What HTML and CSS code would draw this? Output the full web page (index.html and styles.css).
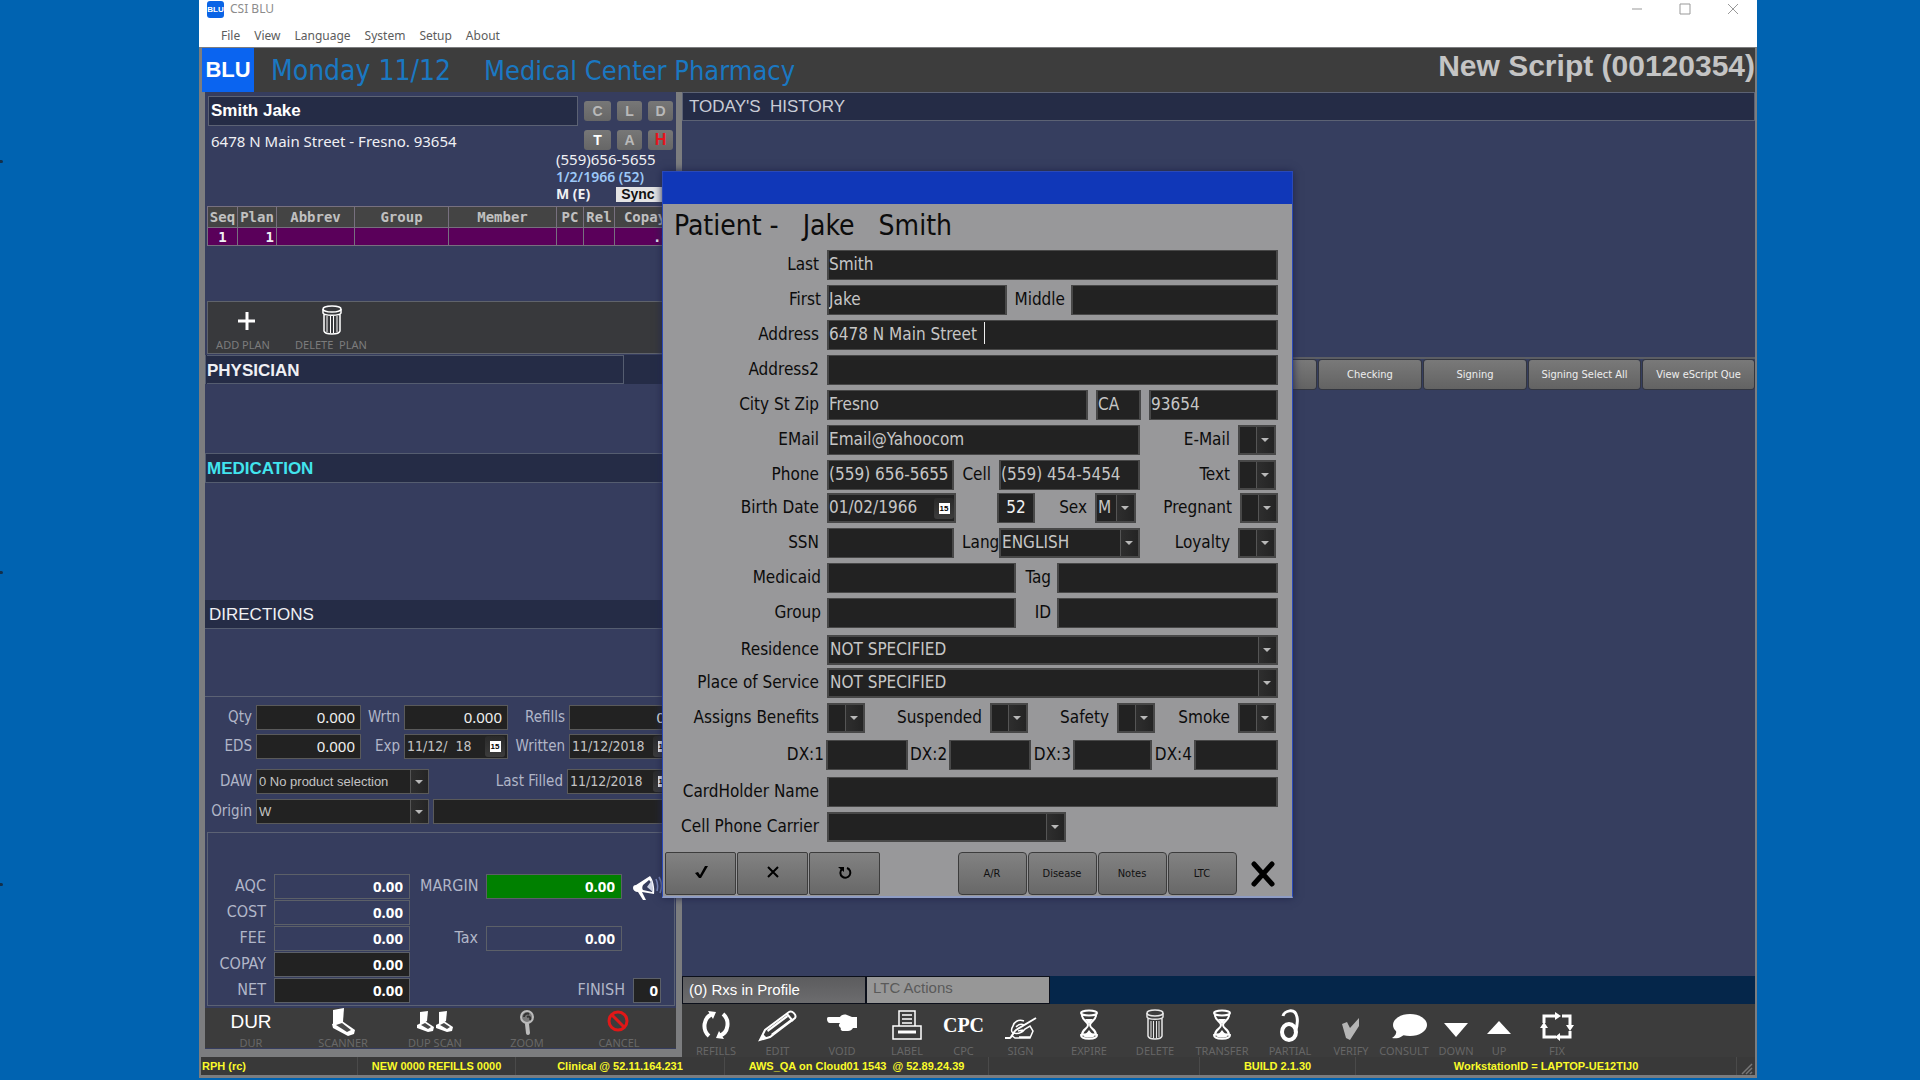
FILE: index.html
```html
<!DOCTYPE html>
<html lang="en">
<head>
<meta charset="utf-8">
<title>CSI BLU</title>
<link rel="stylesheet" href="styles.css">
</head>
<body>
<div class="desktop">
<i class="speck speck-a"></i><i class="speck speck-b"></i><i class="speck speck-c"></i>
<main class="app">
  <div class="title-bar">
    <span class="app-icon">BLU</span>
    <span class="app-title">CSI BLU</span>
    <div class="window-buttons">
      <button type="button" aria-label="Minimize"><svg width="12" height="12" viewBox="0 0 12 12"><path d="M1 6h10"/></svg></button>
      <button type="button" aria-label="Maximize"><svg width="12" height="12" viewBox="0 0 12 12"><path d="M1 1h10v10H1z"/></svg></button>
      <button type="button" aria-label="Close"><svg width="12" height="12" viewBox="0 0 12 12"><path d="M1 1l10 10M11 1L1 11"/></svg></button>
    </div>
  </div>
  <nav class="menu-bar">
    <a href="#">File</a><a href="#">View</a><a href="#">Language</a><a href="#">System</a><a href="#">Setup</a><a href="#">About</a>
  </nav>
  <header class="banner">
    <span class="brand">BLU</span>
    <span class="banner-date">Monday 11/12</span>
    <span class="banner-store">Medical Center Pharmacy</span>
    <h1 class="banner-script">New Script (00120354)</h1>
  </header>

  <div class="workspace">
    <section class="script-panel">
      <div class="patient">
        <div class="patient-head">
          <div class="patient-who">
            <input class="patient-name" type="text" value="Smith Jake" aria-label="Patient">
            <p class="patient-address">6478 N Main Street - Fresno. 93654</p>
          </div>
          <div class="badges">
            <button type="button">C</button><button type="button">L</button><button type="button">D</button>
            <button type="button" class="badge-on">T</button><button type="button">A</button><button type="button" class="badge-alert">H</button>
          </div>
        </div>
        <div class="contact">
          <span>(559)656-5655</span>
          <span class="contact-birth">1/2/1966 (52)</span>
          <div class="contact-sex"><b>M (E)</b><button type="button" class="sync">Sync</button></div>
        </div>
      </div>

      <div class="plans">
        <table class="plan-table">
          <colgroup><col class="c-seq"><col class="c-plan"><col class="c-abbrev"><col class="c-group"><col class="c-member"><col class="c-pc"><col class="c-rel"><col></colgroup>
          <thead><tr><th>Seq</th><th>Plan</th><th>Abbrev</th><th>Group</th><th>Member</th><th>PC</th><th>Rel</th><th>Copay</th></tr></thead>
          <tbody><tr><td class="mid">1</td><td>1</td><td></td><td></td><td></td><td></td><td></td><td class="copay">.00</td></tr></tbody>
        </table>
      </div>
      <div class="plan-tools">
        <button type="button"><svg width="28" height="30" viewBox="0 0 28 30"><path d="M18 7v18M9 16h17" stroke="#fff" stroke-width="3" fill="none"/></svg><span>ADD PLAN</span></button>
        <button type="button"><svg width="28" height="30" viewBox="0 0 28 30" fill="none" stroke="#fff"><ellipse cx="15" cy="4" rx="9" ry="3" stroke-width="1.5"/><path d="M6 4v4c1 3 17 3 18 0V4M7 9v17c1 4 15 4 16 0V9" stroke-width="1.5"/><path d="M10 11v16M13.500 11v17M16.500 11v17M20 11v16"/></svg><span>DELETE&nbsp; PLAN</span></button>
      </div>

      <h2 class="bar bar-physician"><span>PHYSICIAN</span></h2>
      <div class="physician-body"></div>
      <h2 class="bar bar-medication">MEDICATION</h2>
      <div class="medication-body"></div>
      <h2 class="bar bar-directions">DIRECTIONS</h2>
      <div class="directions-body"></div>

      <form class="rx-form">
        <div class="rx-row rx-six">
          <label for="qty">Qty</label><input id="qty" class="dark num" type="text" value="0.000">
          <label for="wrtn">Wrtn</label><input id="wrtn" class="dark num" type="text" value="0.000">
          <label for="refills">Refills</label><input id="refills" class="dark num num-in" type="text" value="0">
        </div>
        <div class="rx-row rx-six">
          <label for="eds">EDS</label><input id="eds" class="dark num" type="text" value="0.000">
          <label for="exp">Exp</label><div class="date dark"><input id="exp" type="text" value="11/12/  18"><button type="button" aria-label="Pick expiry date"><b>15</b></button></div>
          <label for="written">Written</label><div class="date dark"><input id="written" type="text" value="11/12/2018"><button type="button" aria-label="Pick written date"><b>15</b></button></div>
        </div>
        <div class="rx-row rx-four rx-daw">
          <label for="daw">DAW</label><div class="pick dark"><select id="daw"><option>0 No product selection</option></select></div>
          <label for="filled">Last Filled</label><div class="date dark"><input id="filled" type="text" value="11/12/2018"><button type="button" aria-label="Pick filled date"><b>15</b></button></div>
        </div>
        <div class="rx-row rx-three">
          <label for="origin">Origin</label><div class="pick dark"><select id="origin"><option>W</option></select></div>
          <input class="dark" type="text" aria-label="Origin detail">
        </div>
      </form>

      <div class="totals">
        <div class="totals-left">
          <label for="aqc">AQC</label><input id="aqc" type="text" value="0.00">
          <label for="cost">COST</label><input id="cost" type="text" value="0.00">
          <label for="fee">FEE</label><input id="fee" type="text" value="0.00">
          <label for="copay">COPAY</label><input id="copay" class="filled" type="text" value="0.00">
          <label for="net">NET</label><input id="net" class="filled" type="text" value="0.00">
        </div>
        <div class="totals-right">
          <label for="margin">MARGIN</label><input id="margin" class="gain" type="text" value="0.00">
          <svg width="32" height="28" viewBox="0 0 32 28"><path d="M3 14c0-2 1-3 3-3L20 2c3 3 5 12 4 18L12 18l4 8h-3L8 18c-3 0-5-2-5-4z" fill="#fff"/><path d="M19 6c3 2 4 9 3 12l-9-2c-1-1-1-3 0-5z" fill="#363d5e"/><path d="M17 13l5-7 1 12z" fill="#cdd3e4"/><path d="M26 5c2 4 2 8 1 12M29 3c3 5 3 11 1 16" stroke="#7d8cc0" stroke-width="1.500" fill="none"/></svg>
          <label for="tax" class="tax">Tax</label><input id="tax" class="tax" type="text" value="0.00">
          <div class="finish"><label for="finish">FINISH</label><input id="finish" class="filled" type="text" value="0"></div>
        </div>
      </div>

      <div class="left-tools">
        <button type="button"><strong>DUR</strong><span>DUR</span></button>
        <button type="button"><svg width="28" height="28" viewBox="0 0 28 28"><path d="M4 2l11-2-1 14-10 4z" fill="#fff"/><path d="M3 16l10-3 13 9-1 4-6 2L4 20z" fill="#fff"/><path d="M7 17l6-2 9 7-4 2z" fill="#4a4a4a"/></svg><span>SCANNER</span></button>
        <button type="button"><svg width="38" height="28" viewBox="0 0 38 28"><g id="dup"><path d="M4 4l8-1-1 10-7 4z" fill="#fff"/><path d="M1 17l8-4 9 6-1 4-5 1L1 20z" fill="#fff"/><path d="M5 17l4-2 6 4-3 2z" fill="#4a4a4a"/></g><use href="#dup" x="19"/></svg><span>DUP SCAN</span></button>
        <button type="button"><svg width="20" height="28" viewBox="0 0 20 28"><circle cx="10" cy="9" r="6" fill="#777" stroke="#bbb" stroke-width="2"/><path d="M7 9c0-3 3-4 5-3M10 9c2-1 4 0 3 3" stroke="#333" stroke-width="2" fill="none"/><path d="M10 16l1 9" stroke="#bbb" stroke-width="4" stroke-linecap="round"/></svg><span>ZOOM</span></button>
        <button type="button"><svg width="24" height="28" viewBox="0 0 24 28"><circle cx="11" cy="13" r="9" fill="none" stroke="#e01818" stroke-width="3"/><path d="M5 7l12 12" stroke="#e01818" stroke-width="3"/></svg><span>CANCEL</span></button>
      </div>
    </section>

    <section class="history-panel">
      <h2 class="history-title">TODAY'S&nbsp; HISTORY</h2>
      <div class="history-list"></div>
      <div class="queue-tools">
        <span class="queue-blank"></span>
        <button type="button">Checking</button>
        <button type="button">Signing</button>
        <button type="button" class="queue-wide">Signing Select All</button>
        <button type="button" class="queue-wide">View eScript Que</button>
      </div>
      <div class="queue-list"></div>
      <div class="tabs">
        <button type="button" class="tab tab-on">(0) Rxs in Profile</button>
        <button type="button" class="tab">LTC Actions</button>
      </div>
      <div class="right-tools">
        <button type="button"><svg width="28" height="30" viewBox="0 0 28 30" fill="none" stroke="#fff" stroke-width="4"><path d="M11 4C1 7 0 20 7 26M17 26c10-3 11-16 4-22"/><path d="M6 1l8 1-3 7zM22 29l-8-1 3-7z" fill="#fff" stroke="none"/></svg><span>REFILLS</span></button>
        <button type="button"><svg width="40" height="32" viewBox="0 0 40 32"><path d="M2 31l5-10L31 3c3-2 8 3 6 6L12 28z" fill="none" stroke="#fff" stroke-width="2"/><path d="M2 31l3-6 4 4zM9 21L29 6l1 2-20 15zM13 25L33 10l1 2-20 14z" fill="#fff"/><path d="M29 5l6 7" stroke="#fff" stroke-width="2"/></svg><span>EDIT</span></button>
        <button type="button"><svg width="32" height="30" viewBox="0 0 32 30"><path d="M1 9c0-2 1-2 3-2h10c1-2 4-3 7-2l5 2h5v11h-4c-1 2-3 3-5 3h-4c-3 0-4-2-3-3-2-1-3-3-1-5H4c-2 0-3-2-3-4z" fill="#fff"/></svg><span>VOID</span></button>
        <button type="button"><svg width="32" height="32" viewBox="0 0 32 32" fill="none" stroke="#fff" stroke-width="1.500"><path d="M8 17V2h16v15M2 17h28v13H2z"/><path d="M11 6h10M11 10h10M11 14h10"/><path d="M7 23h18" stroke-width="3"/></svg><span>LABEL</span></button>
        <button type="button"><strong class="cpc">CPC</strong><span>CPC</span></button>
        <button type="button"><svg width="34" height="30" viewBox="0 0 34 30" fill="none" stroke="#fff" stroke-width="1.500"><path d="M1 28h5c3-2 3-6 6-8L32 8" stroke-width="2"/><path d="M20 11c-6-2-10 1-11 5-2 3-2 6 0 7 4 1 9 0 12-4l5-3 3 5-3 7H11l-4-3M12 17c3-3 6-3 8-2M14 21l5-1M15 27h12"/></svg><span>SIGN</span></button>
        <button type="button"><svg width="22" height="32" viewBox="0 0 22 32"><g id="hourglass"><path d="M4 6c0 6 6 6 6 10S4 20 4 26M18 6c0 6-6 6-6 10s6 4 6 10" fill="none" stroke="#fff" stroke-width="2"/><ellipse cx="11" cy="4" rx="8" ry="2.500" fill="none" stroke="#fff" stroke-width="2"/><path d="M3 26c0 5 16 5 16 0-2-1-14-1-16 0z" fill="none" stroke="#fff" stroke-width="2"/><path d="M5 27c2-2 4-3 6-6 2 3 4 4 6 6-3 2-9 2-12 0zM7 10h8l-4 5z" fill="#fff"/></g></svg><span>EXPIRE</span></button>
        <button type="button"><svg width="24" height="32" viewBox="0 0 24 32" fill="none" stroke="#e6e6e6"><ellipse cx="12" cy="4" rx="8" ry="3" stroke-width="1.500"/><path d="M4 4v4c1 3 15 3 16 0V4M5 9v18c1 4 13 4 14 0V9" stroke-width="1.500"/><path d="M8 12v16M10.500 12v17M13.500 12v17M16 12v16"/></svg><span>DELETE</span></button>
        <button type="button"><svg width="22" height="32" viewBox="0 0 22 32"><use href="#hourglass"/></svg><span>TRANSFER</span></button>
        <button type="button"><svg width="24" height="34" viewBox="0 0 24 34" fill="none" stroke="#fff"><ellipse cx="11" cy="24" rx="7" ry="8" stroke-width="4"/><path d="M5 8c1-5 12-9 14 1 1 5 0 10-2 15" stroke-width="3"/></svg><span>PARTIAL</span></button>
        <button type="button"><svg width="24" height="30" viewBox="0 0 24 30"><path d="M3 14l5-2 3 6 9-10v8l-9 14-4-2z" fill="#b5b5b5"/></svg><span>VERIFY</span></button>
        <button type="button"><svg class="bubble" width="38" height="32" viewBox="0 0 38 32"><ellipse cx="20" cy="16" rx="17" ry="11" fill="#fff"/><path d="M6 20c1 5-1 7-4 9 6 1 11-1 13-5z" fill="#fff"/></svg><span>CONSULT</span></button>
        <button type="button"><svg width="26" height="30" viewBox="0 0 26 30"><path d="M1 13h24L13 27z" fill="#fff"/></svg><span>DOWN</span></button>
        <button type="button"><svg width="26" height="30" viewBox="0 0 26 30"><path d="M1 24h24L13 11z" fill="#fff"/></svg><span>UP</span></button>
        <button type="button"><svg width="34" height="32" viewBox="0 0 34 32" fill="none" stroke="#fff" stroke-width="3"><path d="M15 7H4v7M22 7h8v10M4 19v9h12M30 22v6H20"/><path d="M15 3l6 4-6 4zM34 16h-8l4 6zM20 24v8l-5-4zM0 19h8l-4-6z" fill="#fff" stroke="none"/></svg><span>FIX</span></button>
      </div>
    </section>
  </div>

  <footer class="status">
    <span class="status-first">RPH (rc)</span><span>NEW 0000 REFILLS 0000</span><span>Clinical @ 52.11.164.231</span><span>AWS_QA on Cloud01 1543&nbsp; @ 52.89.24.39</span><span></span><span>BUILD 2.1.30</span><span>WorkstationID = LAPTOP-UE12TIJ0</span>
    <svg width="12" height="14" viewBox="0 0 12 14"><path d="M1 13L11 3M5 13l6-6M9 13l2-2" stroke="#777" stroke-width="1.500"/></svg>
  </footer>

  <div class="dialog" role="dialog" aria-labelledby="dialog-title">
    <div class="dialog-bar"></div>
    <h2 class="dialog-title" id="dialog-title">Patient -&nbsp;&nbsp; Jake&nbsp;&nbsp; Smith</h2>
    <form class="dialog-form">
      <div class="line">
        <label for="last">Last</label><input id="last" type="text" value="Smith">
      </div>
      <div class="line l-first">
        <label for="first">First</label><input id="first" type="text" value="Jake">
        <label for="middle">Middle</label><input id="middle" type="text">
      </div>
      <div class="line">
        <label for="address">Address</label><div class="typing"><input id="address" type="text" value="6478 N Main Street "><i></i></div>
      </div>
      <div class="line">
        <label for="address2">Address2</label><input id="address2" type="text">
      </div>
      <div class="line l-city">
        <label for="city">City St Zip</label><input id="city" type="text" value="Fresno"><input type="text" value="CA" aria-label="State"><input type="text" value="93654" aria-label="Zip">
      </div>
      <div class="line l-email">
        <label for="email">EMail</label><input id="email" type="text" value="Email@Yahoocom">
        <label for="by-email">E-Mail</label><div class="pick"><select id="by-email"><option></option></select></div>
      </div>
      <div class="line l-phone">
        <label for="phone">Phone</label><input id="phone" type="text" value="(559) 656-5655">
        <label for="cell">Cell</label><input id="cell" type="text" value="(559) 454-5454">
        <label for="by-text">Text</label><div class="pick"><select id="by-text"><option></option></select></div>
      </div>
      <div class="line line-tight l-birth">
        <label for="birth">Birth Date</label><div class="date"><input id="birth" type="text" value="01/02/1966"><button type="button" aria-label="Pick birth date"><b>15</b></button></div>
        <input class="age" type="text" value="52" aria-label="Age">
        <label for="sex">Sex</label><div class="pick"><select id="sex"><option>M</option></select></div>
        <label for="pregnant">Pregnant</label><div class="pick"><select id="pregnant"><option></option></select></div>
      </div>
      <div class="line l-phone">
        <label for="ssn">SSN</label><input id="ssn" type="text">
        <label for="lang">Lang</label><div class="pick"><select id="lang"><option>ENGLISH</option></select></div>
        <label for="loyalty">Loyalty</label><div class="pick"><select id="loyalty"><option></option></select></div>
      </div>
      <div class="line l-pair">
        <label for="medicaid">Medicaid</label><input id="medicaid" type="text">
        <label for="tag">Tag</label><input id="tag" type="text">
      </div>
      <div class="line l-pair">
        <label for="group">Group</label><input id="group" type="text">
        <label for="pid">ID</label><input id="pid" type="text">
      </div>
      <div class="line line-apart">
        <label for="residence">Residence</label><div class="pick"><select id="residence"><option>NOT SPECIFIED</option></select></div>
      </div>
      <div class="line line-tight">
        <label for="place">Place of Service</label><div class="pick"><select id="place"><option>NOT SPECIFIED</option></select></div>
      </div>
      <div class="line l-flags">
        <label for="assigns">Assigns Benefits</label><div class="pick"><select id="assigns"><option></option></select></div>
        <label for="suspended">Suspended</label><div class="pick"><select id="suspended"><option></option></select></div>
        <label for="safety">Safety</label><div class="pick"><select id="safety"><option></option></select></div>
        <label for="smoke">Smoke</label><div class="pick"><select id="smoke"><option></option></select></div>
      </div>
      <div class="line line-apart l-dx">
        <label for="dx1">DX:1</label><input id="dx1" type="text">
        <label for="dx2">DX:2</label><input id="dx2" type="text">
        <label for="dx3">DX:3</label><input id="dx3" type="text">
        <label for="dx4">DX:4</label><input id="dx4" type="text">
      </div>
      <div class="line line-apart">
        <label for="holder">CardHolder Name</label><input id="holder" type="text">
      </div>
      <div class="line l-carrier">
        <label for="carrier">Cell Phone Carrier</label><div class="pick"><select id="carrier"><option></option></select></div>
      </div>
    </form>
    <div class="dialog-actions">
      <div class="action-set action-main">
        <button type="button" aria-label="Save"><svg width="16" height="16" viewBox="0 0 16 16"><path d="M2 9l3-1 2 3 5-9h3L8 14H6z" fill="#000"/></svg></button>
        <button type="button" aria-label="Cancel"><svg width="16" height="16" viewBox="0 0 16 16"><path d="M3 3l10 10M13 3L3 13" stroke="#000" stroke-width="2"/></svg></button>
        <button type="button" aria-label="Refresh"><svg width="16" height="16" viewBox="0 0 16 16"><path d="M10 4a5 5 0 1 1-5 1" stroke="#000" stroke-width="2" fill="none"/><path d="M1 3h6v5z" fill="#000"/></svg></button>
      </div>
      <div class="action-set">
        <button type="button">A/R</button><button type="button">Disease</button><button type="button">Notes</button><button type="button">LTC</button>
      </div>
      <button type="button" class="dismiss" aria-label="Close"><svg width="26" height="26" viewBox="0 0 26 26"><path d="M4 3l18 20M22 3L4 23" stroke="#000" stroke-width="5" stroke-linecap="round"/></svg></button>
    </div>
  </div>
</main>
</div>
</body>
</html>
```
FILE: styles.css
```css
* { box-sizing: border-box; }

body {
  margin: 0;
  background: #0063b1;
  font-family: "DejaVu Sans Condensed", "DejaVu Sans", sans-serif;
}

h1, h2, p { margin: 0; font-weight: normal; }
button, input, select { font-family: inherit; margin: 0; border-radius: 0; }
button { padding: 0; border: 0; background: none; color: inherit; }
input { min-width: 0; width: 100%; }

.desktop {
  position: relative;
  display: flex;
  min-height: 100vh;
  padding: 0 163px 2px 199px;
}

/* Edges of desktop icons that sit mostly off screen */
.speck { position: absolute; left: 0; width: 3px; height: 3px; border-radius: 0 2px 2px 0; background: #12304c; }
.speck-a { top: 160px; }
.speck-b { top: 571px; }
.speck-c { top: 883px; }

.app {
  position: relative;
  flex: 1;
  display: flex;
  flex-direction: column;
  background: #7c7d7f;
}

/* Window frame */
.title-bar {
  display: flex;
  align-items: center;
  height: 22px;
  padding: 0 18px 4px 8px;
  background: #fff;
  color: #8c8c8c;
  font: 12px/16px "Noto Sans", sans-serif;
}
.app-icon {
  width: 17px;
  height: 17px;
  margin-right: 6px;
  border-radius: 3px;
  background: #0a64e6;
  color: #fff;
  font: bold 8px/17px "Liberation Sans", sans-serif;
  text-align: center;
}
.window-buttons { display: flex; gap: 36px; margin-left: auto; }
.window-buttons button { display: flex; }
.window-buttons svg { fill: none; stroke: #999; }

.menu-bar {
  display: flex;
  gap: 14px;
  height: 25px;
  padding: 5px 22px 0;
  background: #fff;
  font: 12px/18px "Noto Sans", sans-serif;
}
.menu-bar a { color: #5c5c5c; text-decoration: none; }

.banner {
  display: flex;
  align-items: flex-start;
  height: 44px;
  margin: 1px 2px 0 3px;
  background: #3d3d3d;
  color: #1a78c2;
  font-size: 28px;
  line-height: 46px;
}
.brand {
  width: 52px;
  height: 44px;
  background: #0a64f0;
  color: #fff;
  font: bold 22px/44px "Liberation Sans", sans-serif;
  text-align: center;
}
.banner-date { margin-left: 17px; }
.banner-store { margin-left: 33px; font-size: 27px; }
.banner-script {
  margin-left: auto;
  color: #c4c4c4;
  font: bold 30px/36px "Liberation Sans", sans-serif;
}

.workspace { display: flex; flex: 1; padding: 0 2px 0 6px; }

/* Left: script entry */
.script-panel {
  width: 471px;
  margin: 0 6px 8px 0;
  background: #363d5e;
  color: #f0f0f4;
}

.patient { padding: 4px 2px 4px 3px; }
.patient-head { display: grid; grid-template-columns: 1fr 90px; column-gap: 6px; }
.patient-name {
  height: 30px;
  padding: 0 2px;
  border: 1px solid #5c6274;
  background: #252c46;
  color: #fff;
  font: bold 17px "Liberation Sans", sans-serif;
}
.patient-address { margin: 5px 0 0 3px; font: 15px/20px "Noto Sans", sans-serif; }
.badges {
  display: grid;
  grid-template-columns: 27px 25px 25px;
  grid-auto-rows: 20px;
  gap: 9px 6px;
  padding-top: 5px;
}
.badges button {
  border-radius: 3px;
  background: linear-gradient(#777, #666);
  color: #b9b9b9;
  font: bold 14px/20px "Liberation Sans", sans-serif;
}
.badges .badge-on { color: #fff; }
.badges .badge-alert { color: #e8141c; font-size: 16px; }

.contact {
  display: flex;
  flex-direction: column;
  margin-left: 348px;
  font: 15px/17px "Noto Sans", sans-serif;
}
.contact-birth { color: #9cc8f8; font-weight: 600; font-size: 14px; }
.contact-sex { display: flex; align-items: flex-end; gap: 26px; font-size: 14px; }
.sync {
  width: 50px;
  height: 15px;
  padding-left: 5px;
  background: #e4e4e4;
  color: #111;
  font: bold 14px/15px "Liberation Sans", sans-serif;
  text-align: left;
}

.plans { height: 95px; padding-left: 2px; }
.plan-table {
  width: 100%;
  border-collapse: collapse;
  table-layout: fixed;
  font: bold 14px/18px "DejaVu Sans Mono", monospace;
}
.plan-table th, .plan-table td { border: 1px solid #77707f; padding: 0 2px; white-space: nowrap; }
.plan-table th { height: 21px; background: #444; color: #c0c0c0; padding: 0; }
.plan-table td { height: 18px; background: #5a005a; text-align: right; line-height: 16px; }
.plan-table .mid { text-align: center; }
.plan-table .copay { text-align: left; padding-left: 38px; }
.c-seq { width: 30px; }
.c-plan { width: 39px; }
.c-abbrev { width: 78px; }
.c-group { width: 94px; }
.c-member { width: 108px; }
.c-pc { width: 27px; }
.c-rel { width: 31px; }

.plan-tools {
  display: flex;
  height: 53px;
  margin-left: 2px;
  border: 1px solid #5f636b;
  background: #38393c;
}
.plan-tools button {
  display: flex;
  flex-direction: column;
  align-items: center;
  gap: 2px;
  width: 106px;
  padding-top: 3px;
  color: #7c7c7c;
  font: 11px/16px "Noto Sans", sans-serif;
  white-space: nowrap;
}
.plan-tools button:first-child { width: 70px; }

.bar {
  height: 30px;
  border: 1px solid #555d70;
  background: #252c46;
  font: 17px/30px "Liberation Sans", sans-serif;
}
.bar-physician { display: flex; height: 29px; margin-top: 1px; padding-left: 1px; border-width: 0 0 0 1px; font-weight: bold; line-height: 29px; }
.bar-physician span { width: 417px; border: 1px solid #555d70; border-left: 0; }
.bar-medication { padding-left: 1px; color: #42e4ee; font-weight: bold; }
.bar-directions { height: 29px; padding-left: 4px; border-width: 0 0 1px; }
.physician-body { height: 69px; }
.medication-body { height: 117px; }
.directions-body { height: 68px; border-bottom: 1px solid #5c6274; }

.dark, .filled { background: #222; }
.dark { border: 1px solid #5a5a5a; color: #c0c0c0; }

.rx-form { padding: 8px 0; color: #b1b6c8; font-size: 15px; }
.rx-row { display: grid; column-gap: 4px; margin-bottom: 4px; }
.rx-row label { line-height: 24px; text-align: right; white-space: nowrap; }
.rx-row > input, .rx-row > div { height: 25px; }
.rx-six { grid-template-columns: 47px 105px 35px 104px 53px 1fr; }
.rx-four { grid-template-columns: 47px 173px 1fr 109px; }
.rx-three { grid-template-columns: 47px 173px 1fr; margin-bottom: 0; }
.rx-daw { margin: 10px 0 5px; }
.num { padding: 0 5px 2px; color: #f0f0f0; font: 15px "Noto Sans", sans-serif; text-align: right; }
.num-in { padding-right: 10px; }

.date { display: flex; align-items: center; }
.date input { flex: 1; border: 0; background: none; padding: 0 0 2px 2px; color: #c4c4c4; white-space: pre; }
.date button { width: 20px; height: 21px; border-radius: 3px; background: linear-gradient(#2a2a2a, #3c3c3c); }
.date b { display: block; width: 11px; height: 11px; margin: 0 auto; border: 1px solid #fff; background: #fff; color: #000; font: bold 8px/9px "Liberation Sans", sans-serif; }
.rx-form .date input { font-size: 14px; }
.rx-form .date button { margin-right: 2px; }

/* Drop-down with a drawn arrow cell at its right end */
.pick { position: relative; display: flex; }
.pick select {
  appearance: none;
  width: 100%;
  padding: 0 18px 0 2px;
  border: 0;
  background: linear-gradient(90deg, #555 1px, #2e2e2e 1px, #242424) right / 18px 100% no-repeat;
  color: #c4c4c4;
}
.pick::after {
  content: "";
  position: absolute;
  right: 5px;
  top: 50%;
  margin-top: -2px;
  border: 4px solid transparent;
  border-top: 4px solid #b8b8b8;
  border-bottom: 0;
}
.rx-form select { font: 13px "Liberation Sans", sans-serif; }

.totals {
  display: flex;
  gap: 10px;
  height: 174px;
  margin: 0 1px 2px 2px;
  padding-top: 41px;
  border: 1px solid #5c6274;
  color: #b1b6c8;
}
.totals-left, .totals-right {
  display: grid;
  grid-auto-rows: 25px;
  align-content: start;
  gap: 1px 8px;
}
.totals-left { grid-template-columns: 58px 136px; }
.totals-right { grid-template-columns: 58px 136px 32px; }
.totals label { line-height: 24px; text-align: right; font-size: 16px; }
.totals input {
  padding: 0 6px 2px;
  border: 1px solid #5c6068;
  background-color: transparent;
  color: #fff;
  font: bold 15px "Noto Sans", sans-serif;
  text-align: right;
}
.totals .filled { background-color: #222; }
.totals .gain { background-color: #008000; }
.totals .tax { grid-row: 3; }
.finish { grid-row: 5; grid-column: 2 / 4; display: grid; grid-template-columns: 139px 28px; gap: 8px; }
.totals .finish input { padding: 0 2px 2px; }

.left-tools {
  display: grid;
  grid-template-columns: repeat(5, 92px);
  height: 40px;
  background: #3c3c3c;
}
.left-tools button, .right-tools button {
  display: flex;
  flex-direction: column;
  align-items: center;
  color: #686868;
  font: 11px/14px "Noto Sans", sans-serif;
  white-space: nowrap;
}
.left-tools svg, .left-tools strong { height: 28px; flex: none; }
.left-tools strong { color: #fff; font: 19px/28px "Liberation Sans", sans-serif; }

/* Right: history and queue */
.history-panel {
  flex: 1;
  display: flex;
  flex-direction: column;
  background: #363e5f;
}
.history-title {
  height: 29px;
  padding-left: 6px;
  border: 1px solid #5c6274;
  background: #252c46;
  color: #c9ccd6;
  font: 17px/28px "Liberation Sans", sans-serif;
}
.history-list { height: 238px; border-bottom: 2px solid #5c5e64; }
.queue-tools {
  display: flex;
  justify-content: flex-end;
  gap: 3px;
  padding: 1px 1px 1px 0;
}
.queue-tools button, .queue-blank {
  width: 102px;
  height: 29px;
  border-radius: 3px;
  background: linear-gradient(#797979, #636363);
  box-shadow: 0 0 0 1px #33363f;
  color: #eee;
  font-size: 11px;
}
.queue-tools .queue-wide { width: 111px; }
.queue-list { flex: 1; }

.tabs { display: flex; height: 28px; background: #05264a; }
.tab {
  width: 184px;
  height: 28px;
  border: 1px solid #0b0f1a;
  background: #979797;
  color: #5a5a5a;
  padding: 0 6px 4px;
  font: 15px/20px "Liberation Sans", sans-serif;
  text-align: left;
}
.tab-on { background: linear-gradient(#5c5c5e, #6c6c6e); color: #fff; padding-bottom: 0; }

.right-tools {
  display: grid;
  grid-template-columns: 62px 61px 68px 62px 51px 63px 74px 58px 76px 60px 62px 44px 60px 26px 90px;
  height: 53px;
  padding: 4px 0 0 3px;
  background: #3c3c3c;
}
.right-tools svg { flex: none; height: 34px; }
.right-tools button { min-width: 0; line-height: 18px; color: #666; }
.right-tools .cpc { height: 34px; color: #fff; font: bold 20px/34px "Liberation Serif", serif; }
.bubble { margin-left: 10px; }

.status {
  display: grid;
  grid-template-columns: 157px 158px 209px 264px 211px 156px 381px 1fr;
  margin: 0 2px 3px;
  background: #393939;
  color: #fbfb2a;
  font: bold 11px/18px "Liberation Sans", sans-serif;
  text-align: center;
}
.status span { border-right: 1px solid #4a4a4a; }
.status .status-first { text-align: left; padding-left: 1px; }
.status svg { margin: 4px 0 0 4px; height: 14px; }

/* Patient dialog floating over the workspace */
.dialog {
  position: absolute;
  left: 463px;
  top: 171px;
  width: 631px;
  border: 1px solid #2a49b8;
  border-bottom: 2px solid #8e9cc4;
  background: #98989a;
  color: #0c0c0c;
  box-shadow: 0 0 8px #20264a;
}
.dialog-bar { height: 32px; background: #1037b8; }
.dialog-title { padding: 4px 0 0 11px; font-size: 28px; line-height: 36px; }
.dialog-form { padding: 1px 14px 0 0; font-size: 17px; }
.line { display: grid; grid-template-columns: 156px 1fr; column-gap: 8px; margin-top: 5px; }
.line-tight { margin-top: 3px; }
.line-apart { margin-top: 7px; }
.line label { line-height: 28px; text-align: right; white-space: nowrap; }
.line > input, .line > div, .typing input {
  height: 30px;
  border: 2px solid #484848;
  border-width: 1px 2px;
  background: #222;
}
.line input, .line select { color: #c6c6c6; font-size: 17px; }
.line input { padding: 0 0 3px; }
.line .pick, .line .date { border-width: 2px; }
.line .pick select { padding: 0 18px 2px 1px; }

.l-first { grid-template-columns: 158px 180px 52px 1fr; column-gap: 6px; }
.l-city { grid-template-columns: 156px 261px 45px 1fr; }
.l-email { grid-template-columns: 156px 313px 82px 38px; }
.l-phone { grid-template-columns: 156px 127px 29px 141px 82px 38px; }
.l-birth { grid-template-columns: 156px 129px 71px 44px 41px 88px 38px; }
.l-birth .age { width: 38px; margin-left: 33px; }
.l-pair { grid-template-columns: 158px 189px 29px 1fr; column-gap: 6px; }
.l-flags { grid-template-columns: 156px 38px 109px 38px 73px 38px 67px 38px; }
.l-dx { grid-template-columns: 161px 82px 37px 82px 38px 79px 38px 1fr; column-gap: 2px; }
.l-carrier { grid-template-columns: 156px 239px; }

.line .age { color: #f0f0f0; text-align: center; }

.line .typing { position: relative; border: 0; }
.typing i { position: absolute; left: 157px; top: 2px; width: 1px; height: 22px; background: #eee; }

.dialog-actions {
  display: flex;
  align-items: center;
  justify-content: space-between;
  padding: 10px 16px 1px 2px;
}
.action-set { display: flex; gap: 1px; }
.action-set button {
  width: 69px;
  height: 43px;
  border: 1px solid #3c3c3c;
  border-radius: 4px;
  background: linear-gradient(#828282, #686868);
  font-size: 11px;
  color: #111;
}
.action-main button { width: 71px; border-radius: 2px; }
.action-main + .action-set { margin-left: 64px; }
.dismiss { display: flex; }
```
